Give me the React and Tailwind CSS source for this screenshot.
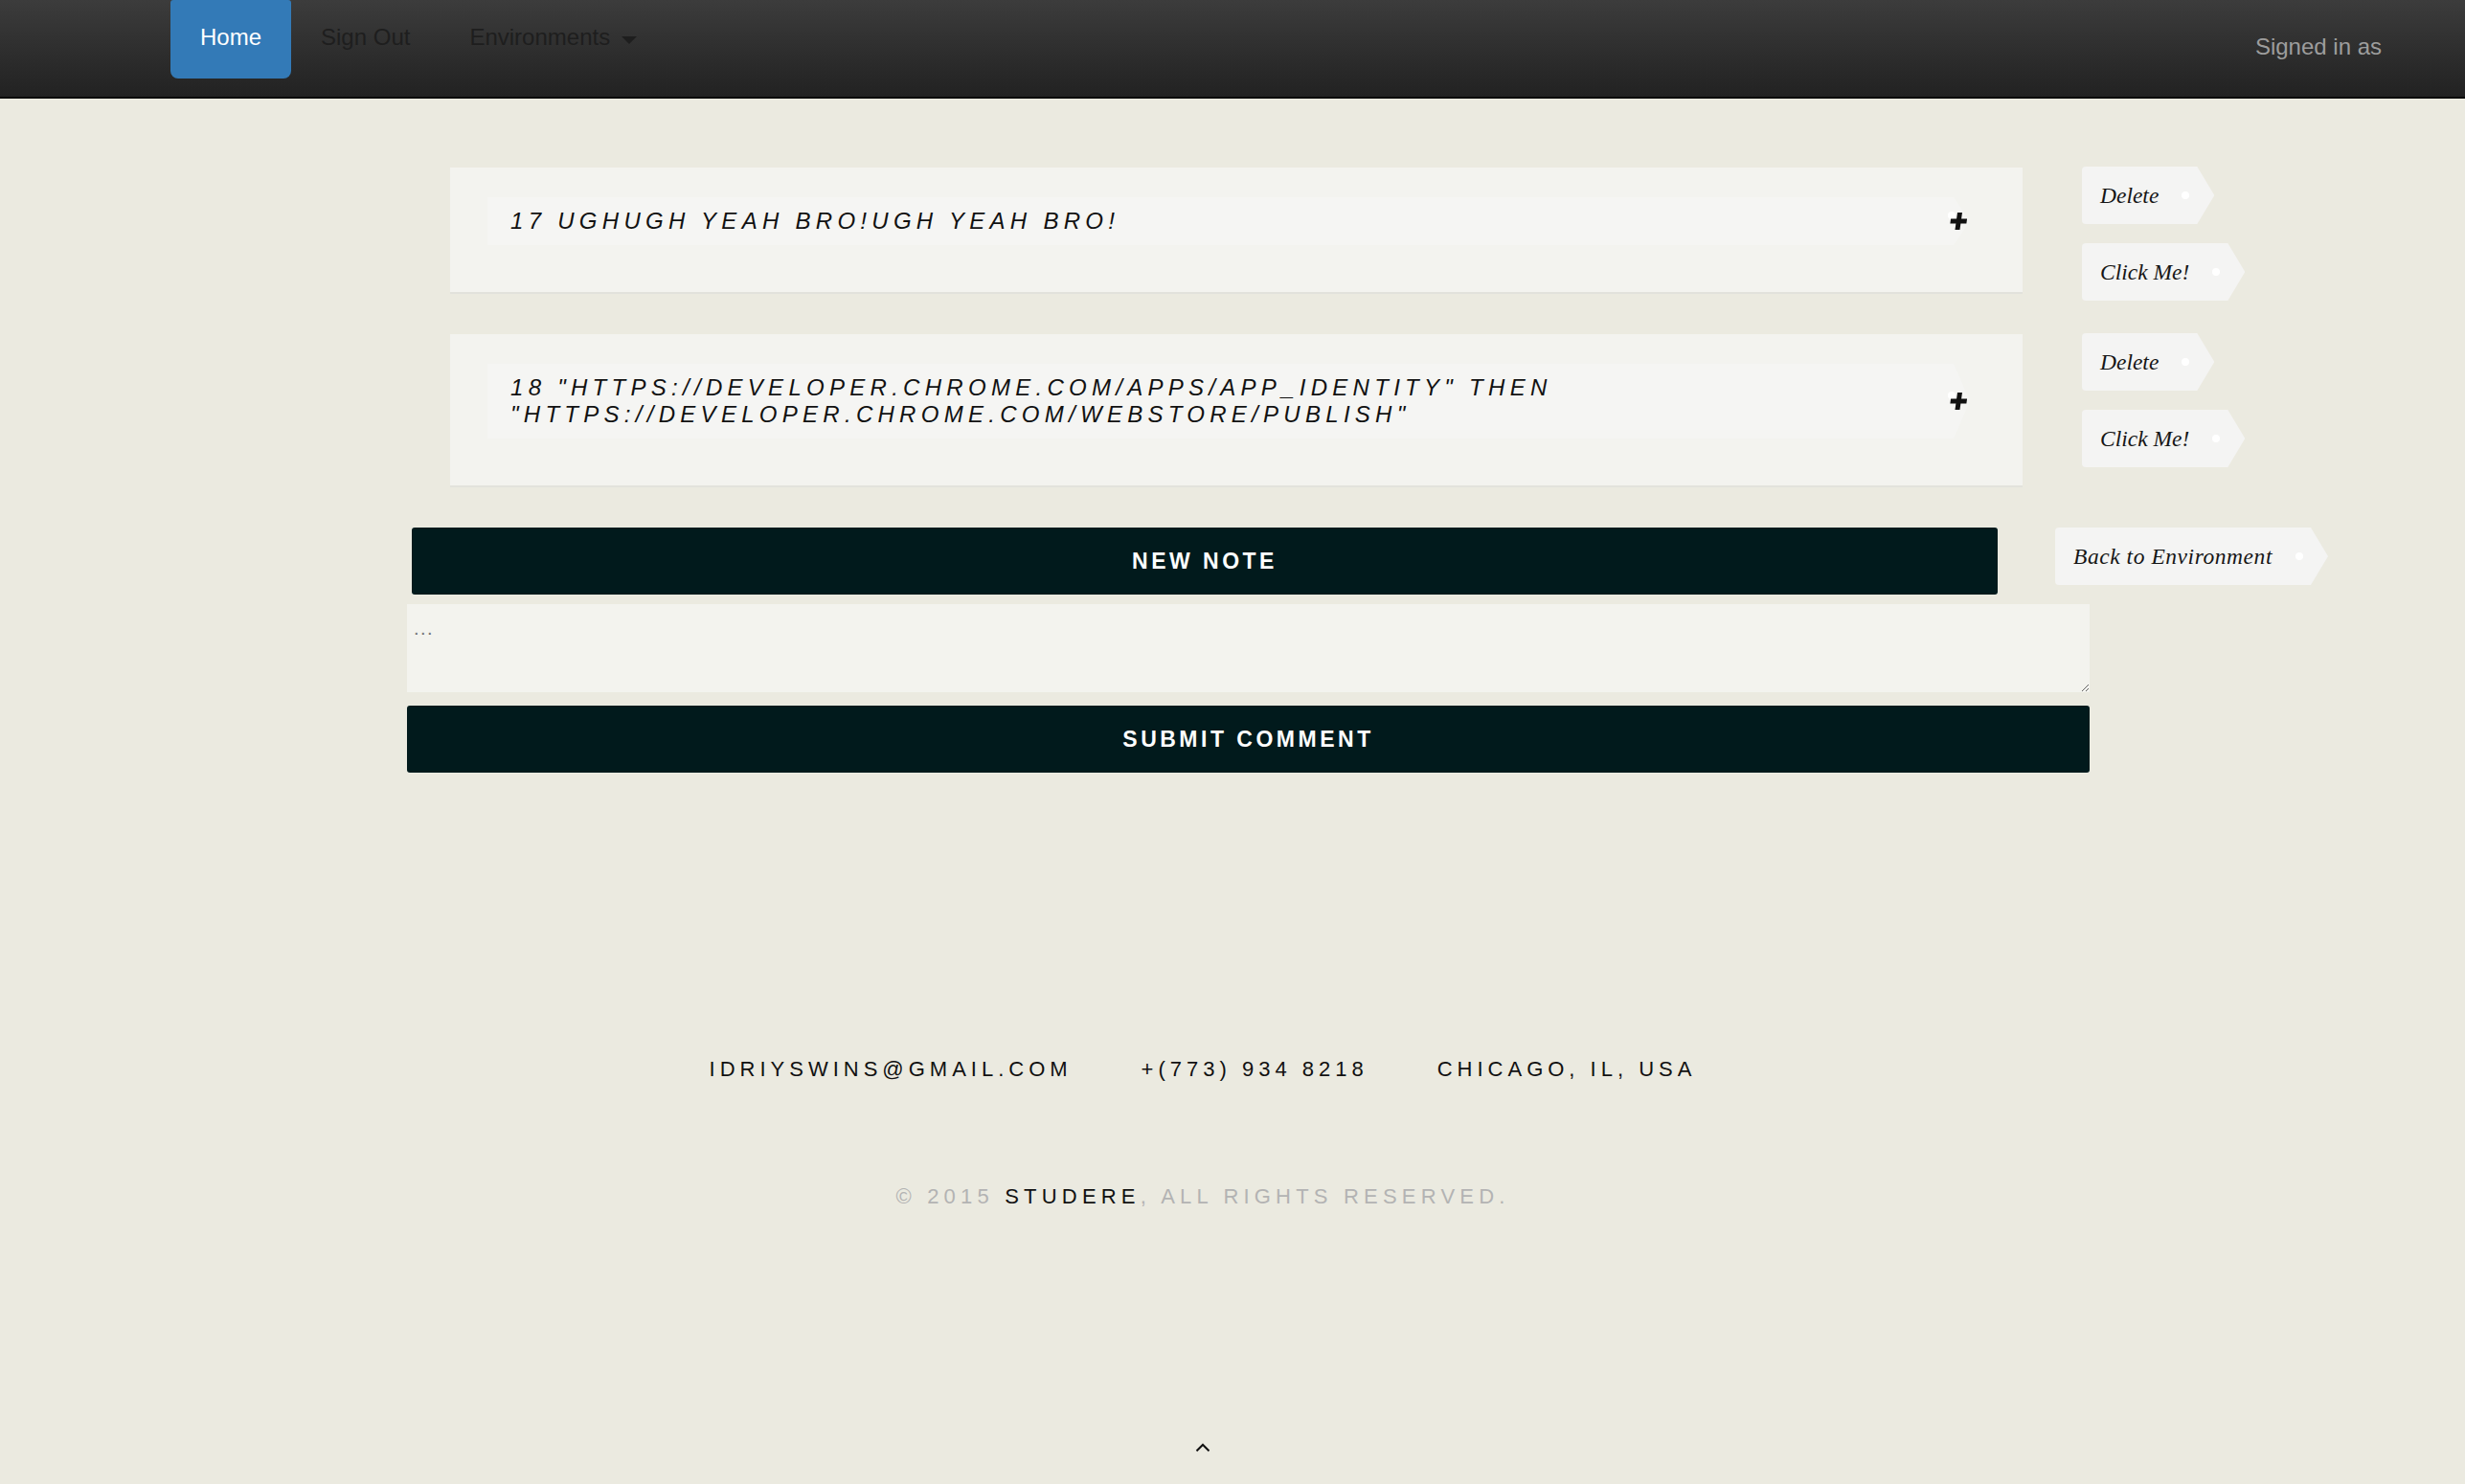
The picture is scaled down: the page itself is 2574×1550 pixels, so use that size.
import React from "react";

function Tag({ children, className = "", textClass = "" }) {
  return (
    <div className={"relative h-[60px] flex items-center pl-[19px] pr-[58px] self-start " + className}>
      <div className="absolute inset-0 bg-[#f4f4f3] rounded-l-[4px] [clip-path:polygon(0_0,calc(100%-18px)_0,100%_50%,calc(100%-18px)_100%,0_100%)]" />
      <span className={"relative font-['Liberation_Serif',serif] italic text-[23.5px] leading-[28px] text-[#161616] whitespace-nowrap " + textClass}>
        {children}
      </span>
      <span className="absolute right-[26px] top-1/2 -translate-y-1/2 w-[8px] h-[8px] rounded-full bg-white" />
    </div>
  );
}

function Plus() {
  return (
    <svg width="20" height="18" viewBox="0 0 20 18" className="block">
      <path
        d="M8 0h5v6.5h6v5h-6V18H8v-6.5H2v-5h6z"
        fill="#111"
        transform="translate(2,0) skewX(-8)"
      />
    </svg>
  );
}

function Note({ children }) {
  return (
    <div className="flex items-start">
      <div className="ml-[470px] w-[1642px] mb-[44px] bg-[#f3f3ef] shadow-[0_2px_0_#e2e2dc] pt-[31px] pb-[49px] pl-[39px] pr-[55px]">
        <div className="relative">
          <div className="absolute inset-0 bg-[#f5f5f3] [clip-path:polygon(0_0,calc(100%-17px)_0,100%_50%,calc(100%-17px)_100%,0_100%)]" />
          <span className="absolute right-[15px] top-[calc(50%-10px)] w-[8px] h-[8px] rounded-full bg-white" />
          <div className="relative pl-[24px] pr-[80px] py-[11px] text-[24px] leading-[28px] italic uppercase tracking-[0.22em] text-[#111]">
            {children}
          </div>
          <div className="absolute right-[3px] top-1/2 -translate-y-1/2">
            <Plus />
          </div>
        </div>
      </div>
      <div className="ml-[62px] -mt-px flex flex-col gap-[20px]">
        <Tag>Delete</Tag>
        <Tag>Click Me!</Tag>
      </div>
    </div>
  );
}

export default function App() {
  return (
    <div className="min-h-[1550px] bg-[#ebeae0] font-['Liberation_Sans',Arial,sans-serif]">
      <nav className="h-[103px] bg-gradient-to-b from-[#3c3c3c] to-[#222222] border-b-2 border-[#080808] flex items-start justify-between">
        <div className="ml-[178px] flex items-start text-[24px] leading-[27px]">
          <a className="h-[82px] px-[31px] pt-[25px] bg-[#337ab7] rounded-b-[8px] rounded-t-[3px] text-white">Home</a>
          <a className="px-[31px] pt-[25px] text-[#1e1e1e]">Sign Out</a>
          <a className="pl-[31px] pt-[25px] text-[#1e1e1e] flex items-start">
            Environments
            <svg width="16" height="8" viewBox="0 0 16 8" className="ml-[12px] mt-[13px]">
              <path d="M0 0h16L8 8z" fill="#1e1e1e" />
            </svg>
          </a>
        </div>
        <div className="mr-[87px] pt-[35px] text-[24px] leading-[27px] text-[#9d9d9d]">Signed in as</div>
      </nav>

      <main className="pt-[72px]">
        <Note>17 ughugh yeah bro!ugh yeah bro!</Note>
        <Note>
          18 "https://developer.chrome.com/apps/app_identity" then "https://developer.chrome.com/webstore/publish"
        </Note>

        <div className="flex items-start">
          <button className="ml-[430px] w-[1656px] h-[70px] bg-[#011a1c] rounded-[3px] text-white font-bold text-[23px] tracking-[3.5px] uppercase">
            New Note
          </button>
          <Tag className="ml-[60px]" textClass="tracking-[0.55px]">Back to Environment</Tag>
        </div>

        <textarea
          placeholder="..."
          className="block mt-[10px] ml-[425px] w-[1757px] h-[92px] bg-[#f3f3ee] pt-[13px] pl-[7px] text-[20px] leading-[24px] tracking-[1.5px] text-[#333] placeholder:text-[#777] outline-none"
        />

        <button className="block mt-[14px] ml-[425px] w-[1757px] h-[70px] bg-[#011a1c] rounded-[3px] text-white font-bold text-[23px] tracking-[3.5px] uppercase">
          Submit Comment
        </button>
      </main>

      <footer className="pt-[297px] pr-[62px]">
        <div className="flex justify-center gap-[72px] text-[22px] leading-[25px] tracking-[5px] uppercase text-[#111]">
          <span>idriyswins@gmail.com</span>
          <span>+(773) 934 8218</span>
          <span>Chicago, IL, USA</span>
        </div>
        <div className="mt-[108px] text-center text-[22px] leading-[25px] tracking-[5.2px] uppercase text-[#b3b3b3]">
          © 2015 <span className="text-[#111]">Studere</span>, All Rights Reserved.
        </div>
        <div className="mt-[245px] flex justify-center">
          <svg width="16" height="10" viewBox="0 0 16 10">
            <path d="M1.5 8.5L8 2l6.5 6.5" fill="none" stroke="#111" strokeWidth="2" />
          </svg>
        </div>
      </footer>
    </div>
  );
}
